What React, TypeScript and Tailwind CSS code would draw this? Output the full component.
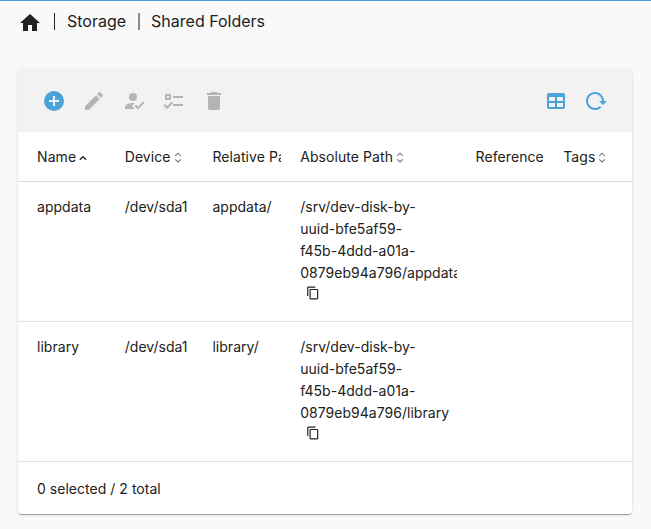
import React from 'react';

const icons = {
  home: 'M10,20V14H14V20H19V12H22L12,3L2,12H5V20H10Z',
  add: 'M17,13H13V17H11V13H7V11H11V7H13V11H17M12,2A10,10 0 0,0 2,12A10,10 0 0,0 12,22A10,10 0 0,0 22,12A10,10 0 0,0 12,2Z',
  edit: 'M20.71,7.04C21.1,6.65 21.1,6 20.71,5.63L18.37,3.29C18,2.9 17.35,2.9 16.96,3.29L15.12,5.12L18.87,8.87M3,17.25V21H6.75L17.81,9.93L14.06,6.18L3,17.25Z',
  permissions:
    'M21.1,12.5L22.5,13.91L15.97,20.5L12.5,17L13.9,15.59L15.97,17.67L21.1,12.5M10,17L13,20H3V18C3,15.79 6.58,14 11,14L12.89,14.11L10,17M11,4A4,4 0 0,1 15,8A4,4 0 0,1 11,12A4,4 0 0,1 7,8A4,4 0 0,1 11,4Z',
  acl: 'M3,5H9V11H3V5M5,7V9H7V7H5M11,7H21V9H11V7M11,15H21V17H11V15M5,20L1.5,16.5L2.91,15.09L5,17.17L9.59,12.59L11,14L5,20Z',
  remove: 'M19,4H15.5L14.5,3H9.5L8.5,4H5V6H19M6,19A2,2 0 0,0 8,21H16A2,2 0 0,0 18,19V7H6V19Z',
  table:
    'M5,4H19A2,2 0 0,1 21,6V18A2,2 0 0,1 19,20H5A2,2 0 0,1 3,18V6A2,2 0 0,1 5,4M5,8V12H11V8H5M13,8V12H19V8H13M5,14V18H11V14H5M13,14V18H19V14H13Z',
  reload:
    'M2 12C2 16.97 6.03 21 11 21C13.39 21 15.68 20.06 17.4 18.4L15.9 16.9C14.63 18.25 12.86 19 11 19C4.76 19 1.64 11.46 6.05 7.05C10.46 2.64 18 5.77 18 12H15L19 16H19.1L23 12H20C20 7.03 15.97 3 11 3C6.03 3 2 7.03 2 12Z',
  copy: 'M19,21H8V7H19M19,5H8A2,2 0 0,0 6,7V21A2,2 0 0,0 8,23H19A2,2 0 0,0 21,21V7A2,2 0 0,0 19,5M16,1H4A2,2 0 0,0 2,3V17H4V3H16V1Z',
};

function Icon({ name, className = 'size-6' }: { name: keyof typeof icons; className?: string }) {
  return (
    <svg viewBox="0 0 24 24" fill="currentColor" className={`shrink-0 ${className}`}>
      <path d={icons[name]} />
    </svg>
  );
}

function SortMark({ active }: { active?: boolean }) {
  return active ? (
    <svg viewBox="0 0 8 12" className="ml-[3px] h-3 w-2 shrink-0" fill="none" stroke="#222" strokeWidth="1.3">
      <path d="M0.8 8.7L4 5.7L7.2 8.7" />
    </svg>
  ) : (
    <svg viewBox="0 0 8 12" className="ml-[3px] h-3 w-2 shrink-0" fill="none" stroke="#777" strokeWidth="1.1">
      <path d="M1.2 4.8L4 2.2L6.8 4.8M1.2 8.4L4 11L6.8 8.4" />
    </svg>
  );
}

const columns = ['Name', 'Device', 'Relative Path', 'Absolute Path', 'Referenced', 'Tags'];

const rows = [
  { name: 'appdata', device: '/dev/sda1', relative: 'appdata/' },
  { name: 'library', device: '/dev/sda1', relative: 'library/' },
];

const grid = 'grid grid-cols-[1fr_1fr_1fr_2fr_1fr_1fr]';
const cell = 'min-w-0 overflow-hidden pl-[19px]';

export default function App() {
  return (
    <div className="h-[529px] overflow-hidden border-t border-[#4aa3d8] bg-[#f9f9f9] font-['Inter',sans-serif] text-sm tracking-[0.03px] text-[#212121]">
      <nav className="flex h-10 items-center pl-[18px] text-base tracking-normal">
        <Icon name="home" className="mt-1 size-6" />
        <span className="ml-3 h-[17px] w-px bg-[#212121]" />
        <span className="ml-3">Storage</span>
        <span className="ml-3 h-[17px] w-0.5 bg-[#8c8c8c]" />
        <span className="ml-[11px]">Shared Folders</span>
      </nav>

      <main className="mt-[27px] ml-[18px] w-[614px] rounded bg-white shadow-[0_2px_1px_-1px_rgba(0,0,0,0.2),0_1px_1px_rgba(0,0,0,0.14),0_1px_3px_rgba(0,0,0,0.12)]">
        <div className="flex h-16 items-center gap-4 rounded-t bg-[#f2f2f2] pt-0.5 pr-6 pl-6 text-[#b4b4b4]">
          <Icon name="add" className="size-6 text-[#4aa3d8]" />
          <Icon name="edit" />
          <Icon name="permissions" />
          <Icon name="acl" />
          <Icon name="remove" />
          <Icon name="table" className="ml-auto size-6 text-[#4aa3d8]" />
          <Icon name="reload" className="size-6 text-[#4aa3d8]" />
        </div>

        <div className={`${grid} h-[50px] border-b border-[#dcdcdc] tracking-[0.08px]`}>
          {columns.map((label, i) => (
            <div key={label} className={`${cell} flex items-center whitespace-nowrap`}>
              <span>{label}</span>
              <SortMark active={i === 0} />
            </div>
          ))}
        </div>

        {rows.map((row) => (
          <div key={row.name} className={`${grid} h-[140px] border-b border-[#e2e2e2] pt-3.5 leading-[22px]`}>
            <div className={cell}>{row.name}</div>
            <div className={cell}>{row.device}</div>
            <div className={cell}>{row.relative}</div>
            <div className={cell}>
              <div className="whitespace-nowrap">
                /srv/dev-disk-by-
                <br />
                uuid-bfe5af59-
                <br />
                f45b-4ddd-a01a-
                <br />
                0879eb94a796/{row.name}
              </div>
              <Icon name="copy" className="mt-0.5 ml-1.5 size-3.5" />
            </div>
          </div>
        ))}

        <footer className="flex h-[52px] items-center pt-0.5 pl-[19px]">0 selected / 2 total</footer>
      </main>
    </div>
  );
}
